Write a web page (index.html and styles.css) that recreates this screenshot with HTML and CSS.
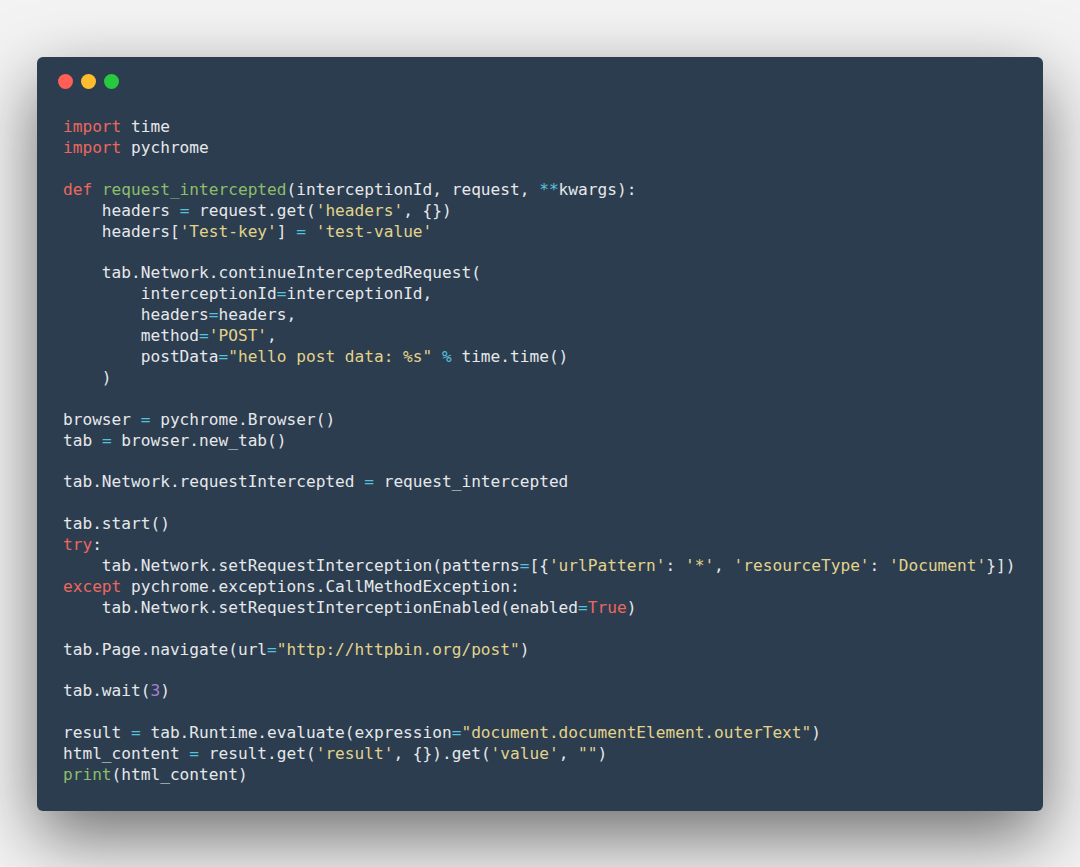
FILE: index.html
```html
<!DOCTYPE html>
<html>
<head>
<meta charset="utf-8">
<link rel="stylesheet" href="styles.css">
</head>
<body>
<div class="stage">
  <div class="window">
    <div class="controls">
      <span class="dot red"></span>
      <span class="dot yellow"></span>
      <span class="dot green"></span>
    </div>
<pre class="code"><span class="k">import</span> time
<span class="k">import</span> pychrome

<span class="k">def</span> <span class="f">request_intercepted</span>(interceptionId, request, <span class="o">**</span>kwargs):
    headers <span class="o">=</span> request.get(<span class="s">'headers'</span>, {})
    headers[<span class="s">'Test-key'</span>] <span class="o">=</span> <span class="s">'test-value'</span>

    tab.Network.continueInterceptedRequest(
        interceptionId<span class="o">=</span>interceptionId,
        headers<span class="o">=</span>headers,
        method<span class="o">=</span><span class="s">'POST'</span>,
        postData<span class="o">=</span><span class="s">"hello post data: %s"</span> <span class="o">%</span> time.time()
    )

browser <span class="o">=</span> pychrome.Browser()
tab <span class="o">=</span> browser.new_tab()

tab.Network.requestIntercepted <span class="o">=</span> request_intercepted

tab.start()
<span class="k">try</span>:
    tab.Network.setRequestInterception(patterns<span class="o">=</span>[{<span class="s">'urlPattern'</span>: <span class="s">'*'</span>, <span class="s">'resourceType'</span>: <span class="s">'Document'</span>}])
<span class="k">except</span> pychrome.exceptions.CallMethodException:
    tab.Network.setRequestInterceptionEnabled(enabled<span class="o">=</span><span class="k">True</span>)

tab.Page.navigate(url<span class="o">=</span><span class="s">"http://httpbin.org/post"</span>)

tab.wait(<span class="n">3</span>)

result <span class="o">=</span> tab.Runtime.evaluate(expression<span class="o">=</span><span class="s">"document.documentElement.outerText"</span>)
html_content <span class="o">=</span> result.get(<span class="s">'result'</span>, {}).get(<span class="s">'value'</span>, <span class="s">""</span>)
<span class="f">print</span>(html_content)</pre>
  </div>
</div>
</body>
</html>
```

FILE: styles.css
```css
html, body {
  margin: 0;
  padding: 0;
  background: #f3f3f3;
}

.stage {
  width: 1080px;
  height: 867px;
  padding: 57px 0 0 37px;
  box-sizing: border-box;
  overflow: hidden;
}

.window {
  width: 1006px;
  height: 754px;
  box-sizing: border-box;
  background: #2c3d50;
  border-radius: 6px;
  box-shadow: 0 26px 70px rgba(0, 0, 0, 0.55);
  padding: 17px 26px 0 21px;
  display: flex;
  flex-direction: column;
}

.controls {
  display: flex;
  gap: 8px;
  height: 15px;
}

.dot {
  width: 15px;
  height: 15px;
  border-radius: 50%;
  display: block;
}

.red { background: #ff5f56; }
.yellow { background: #ffbd2e; }
.green { background: #27c93f; }

.code {
  margin: 28px 0 0 5px;
  font-family: "DejaVu Sans Mono", "Liberation Mono", monospace;
  font-size: 16.15px;
  line-height: 20.9px;
  color: #e6e8ea;
  white-space: pre;
}

.k { color: #ec675e; }
.f { color: #8dbd6b; }
.s { color: #e2d38b; }
.o { color: #56c2dd; }
.n { color: #a781d3; }
```
